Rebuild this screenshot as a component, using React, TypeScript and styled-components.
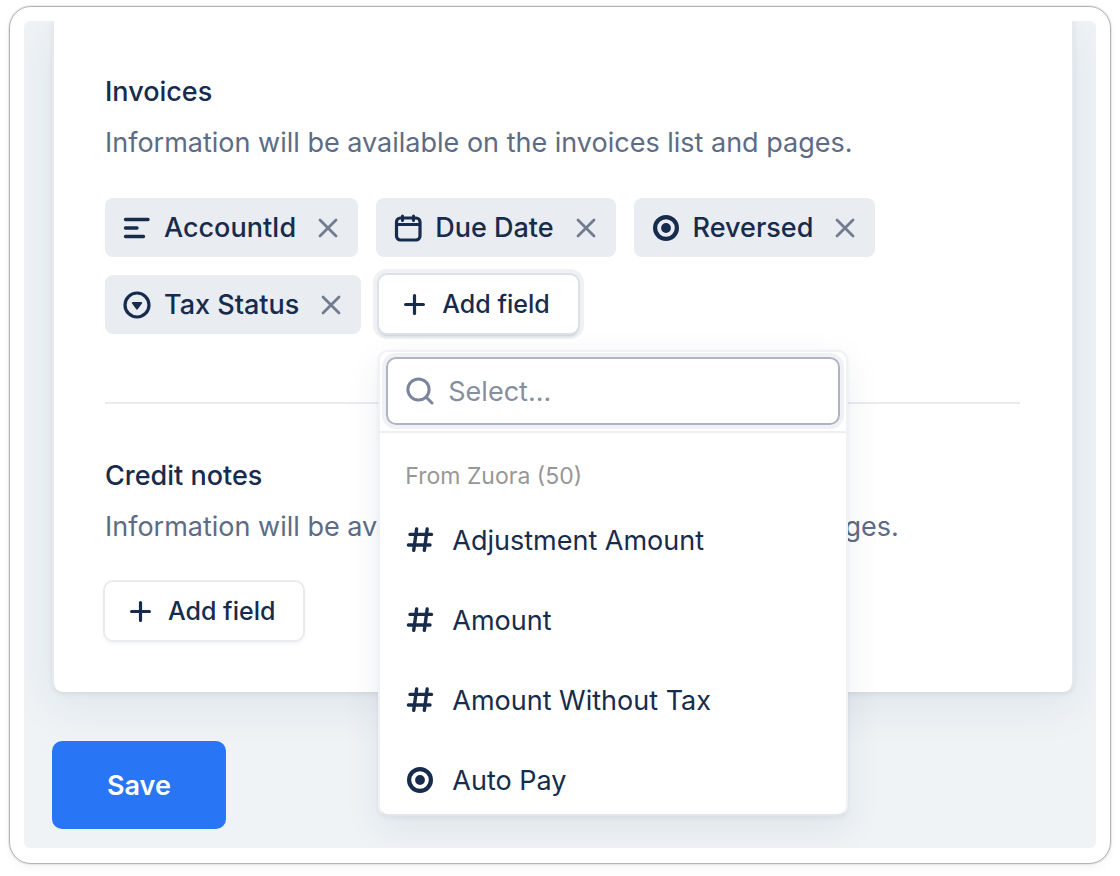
import React from "react";
import styled, { createGlobalStyle } from "styled-components";

const ink = "#172b4d";
const muted = "#5e6b84";

const GlobalStyle = createGlobalStyle`
  *, *::before, *::after { box-sizing: border-box; }
  body {
    margin: 0;
    background: #ffffff;
    color: ${ink};
    font-family: Inter, "Liberation Sans", sans-serif;
  }
  button, input { font: inherit; color: inherit; }
`;

const Page = styled.main`
  padding: 6px 9px 12px;
`;

const Frame = styled.div`
  padding: 14px 14px 15px;
  border: 1px solid #b4b4b4;
  border-radius: 22px;
  background: #ffffff;
  box-shadow: 0 0 1px 1px rgba(0, 0, 0, 0.08), 0 4px 8px rgba(0, 0, 0, 0.04);
`;

const Canvas = styled.div`
  padding: 0 22px 19px 28px;
  border-radius: 6px;
  overflow: hidden;
  background: #eff3f6;
`;

const Card = styled.form`
  padding: 53px 52px 52px 51px;
  border: 2px solid #e6e9ee;
  border-width: 0 2px;
  border-radius: 0 0 10px 10px;
  background: #ffffff;
  background-clip: padding-box;
  box-shadow: 0 2px 4px rgba(30, 50, 80, 0.08), 0 12px 48px rgba(30, 50, 80, 0.08);
`;

const Heading = styled.h2`
  margin: 0;
  font-size: 27px;
  line-height: 36px;
  font-weight: 500;
`;

const Description = styled.p`
  margin: 15px 0 37px;
  color: ${muted};
  font-size: 27px;
  line-height: 36px;
  white-space: nowrap;
`;

const Divider = styled.hr`
  height: 2px;
  margin: 68px 0 54px;
  border: 0;
  background: #e9ebee;
`;

const FieldList = styled.div`
  display: flex;
  flex-wrap: wrap;
  gap: 18px;
`;

const Chip = styled.span`
  display: inline-flex;
  align-items: center;
  height: 59px;
  padding: 0 20px 0 18px;
  border-radius: 8px;
  background: #e9ecf0;
  font-size: 27px;
  font-weight: 500;
`;

const ChipLabel = styled.span`
  margin: 0 22px 0 13px;
`;

const RemoveButton = styled.button`
  display: flex;
  padding: 0;
  border: 0;
  background: none;
  color: #717c8f;
`;

const AddButton = styled.button<{ $open?: boolean }>`
  display: inline-flex;
  align-items: center;
  gap: 17px;
  height: 58px;
  padding: 0 28px 0 25px;
  border: 0;
  border-radius: 8px;
  background: #ffffff;
  font-size: 25px;
  font-weight: 500;
  box-shadow: ${(p) =>
    p.$open
      ? "0 0 0 2px #dde0e6, 0 3px 3px 0 rgba(30, 50, 80, 0.2), 0 0 0 6px #eff1f4"
      : "0 0 0 2px #e9ebee, 0 3px 4px 1px rgba(30, 50, 80, 0.06)"};
`;

const MenuAnchor = styled.div`
  position: relative;
`;

const Menu = styled.div`
  position: absolute;
  z-index: 1;
  top: 75px;
  left: -1px;
  width: 470px;
  border: 2px solid #f0f1f4;
  border-bottom-color: #e2e5ea;
  border-radius: 10px;
  overflow: hidden;
  background: #ffffff;
  background-clip: padding-box;
  box-shadow: 0 2px 4px rgba(30, 50, 80, 0.06), 0 12px 36px rgba(30, 50, 80, 0.08);
`;

const SearchArea = styled.div`
  padding: 5px 6px 6px;
  border-bottom: 2px solid #eceef1;
`;

const SearchBox = styled.label`
  display: flex;
  align-items: center;
  gap: 14px;
  height: 68px;
  padding: 0 18px;
  border: 2px solid #afb4c3;
  border-radius: 10px;
  color: #7a859b;
  box-shadow: 0 0 0 4px #eff1f4;
`;

const SearchInput = styled.input`
  flex: 1;
  min-width: 0;
  padding: 0;
  border: 0;
  outline: 0;
  background: none;
  color: ${ink};
  font-size: 27px;

  &::placeholder { color: #858e9f; opacity: 1; }
`;

const Results = styled.div`
  max-height: 381px;
  overflow: hidden;
`;

const GroupLabel = styled.div`
  padding: 26px 25px 7px;
  color: #979797;
  font-size: 23px;
  line-height: 34px;
`;

const Options = styled.ul`
  margin: 0;
  padding: 0;
  list-style: none;
`;

const Option = styled.button`
  display: flex;
  align-items: center;
  gap: 18px;
  width: 100%;
  height: 80px;
  padding: 0 26px;
  border: 0;
  background: none;
  font-size: 27px;
  text-align: left;
`;

const SaveButton = styled.button`
  height: 88px;
  margin-top: 49px;
  padding: 0 55px;
  border: 0;
  border-radius: 10px;
  background: #2876f5;
  color: #ffffff;
  font-size: 27px;
  font-weight: 600;
`;

const Glyph = styled.svg`
  display: block;
  flex: none;
  fill: none;
  stroke: currentColor;
  stroke-width: 3;
  stroke-linecap: round;
  stroke-linejoin: round;
`;

type IconKind = "text" | "date" | "radio" | "select" | "number";

function FieldIcon({ kind }: { kind: IconKind }) {
  return (
    <Glyph width="28" height="28" viewBox="0 0 28 28" aria-hidden="true">
      {kind === "text" && <path d="M2.5 5.5H25M2.5 14H14M2.5 22.5H20.5" strokeWidth="3.4" />}
      {kind === "date" && (
        <>
          <rect x="2.5" y="4" width="23.5" height="22" rx="4" strokeWidth="3.2" />
          <path d="M3 10.5H25.5M8.5 2V6.5M19.5 2V6.5" />
        </>
      )}
      {kind === "radio" && (
        <>
          <circle cx="14" cy="14" r="10.9" strokeWidth="4.2" />
          <circle cx="14" cy="14" r="4.9" fill="currentColor" stroke="none" />
        </>
      )}
      {kind === "select" && (
        <>
          <circle cx="14" cy="14" r="12" strokeWidth="3.2" />
          <path d="M9.8 12H18.2L14 17.7Z" fill="currentColor" strokeWidth="1.8" />
        </>
      )}
      {kind === "number" && (
        <path
          d="M4 8.4H25.5M2.4 19H24M10.6 3L7.7 24.4M21.2 3L18.3 24.4"
          strokeWidth="3.4"
        />
      )}
    </Glyph>
  );
}

function CloseIcon() {
  return (
    <Glyph width="20" height="20" viewBox="0 0 20 20" aria-hidden="true">
      <path d="M2 2L18 18M18 2L2 18" strokeWidth="2.8" />
    </Glyph>
  );
}

function PlusIcon() {
  return (
    <Glyph width="21" height="21" viewBox="0 0 21 21" aria-hidden="true">
      <path d="M10.5 1.6V19.4M1.6 10.5H19.4" strokeWidth="3.2" />
    </Glyph>
  );
}

function SearchIcon() {
  return (
    <Glyph width="28" height="28" viewBox="0 0 28 28" aria-hidden="true">
      <circle cx="12.5" cy="12.5" r="10.6" />
      <path d="M20.5 20.5L26 26" />
    </Glyph>
  );
}

const fields: { label: string; kind: IconKind }[] = [
  { label: "AccountId", kind: "text" },
  { label: "Due Date", kind: "date" },
  { label: "Reversed", kind: "radio" },
  { label: "Tax Status", kind: "select" },
];

const options: { label: string; kind: IconKind }[] = [
  { label: "Adjustment Amount", kind: "number" },
  { label: "Amount", kind: "number" },
  { label: "Amount Without Tax", kind: "number" },
  { label: "Auto Pay", kind: "radio" },
];

export default function App() {
  return (
    <>
      <GlobalStyle />
      <Page>
        <Frame>
          <Canvas>
            <Card id="fields-form">
              <section>
                <Heading>Invoices</Heading>
                <Description>
                  Information will be available on the invoices list and pages.
                </Description>
                <FieldList>
                  {fields.map((f) => (
                    <Chip key={f.label}>
                      <FieldIcon kind={f.kind} />
                      <ChipLabel>{f.label}</ChipLabel>
                      <RemoveButton type="button" aria-label={`Remove ${f.label}`}>
                        <CloseIcon />
                      </RemoveButton>
                    </Chip>
                  ))}
                  <MenuAnchor>
                    <AddButton type="button" $open aria-expanded="true">
                      <PlusIcon />
                      Add field
                    </AddButton>
                    <Menu>
                      <SearchArea>
                        <SearchBox>
                          <SearchIcon />
                          <SearchInput
                            type="text"
                            placeholder="Select..."
                            aria-label="Search fields"
                          />
                        </SearchBox>
                      </SearchArea>
                      <Results>
                        <GroupLabel>From Zuora (50)</GroupLabel>
                        <Options>
                          {options.map((o) => (
                            <li key={o.label}>
                              <Option type="button">
                                <FieldIcon kind={o.kind} />
                                {o.label}
                              </Option>
                            </li>
                          ))}
                        </Options>
                      </Results>
                    </Menu>
                  </MenuAnchor>
                </FieldList>
              </section>
              <Divider />
              <section>
                <Heading>Credit notes</Heading>
                <Description>
                  Information will be available on the credit notes list and pages.
                </Description>
                <FieldList>
                  <AddButton type="button">
                    <PlusIcon />
                    Add field
                  </AddButton>
                </FieldList>
              </section>
            </Card>
            <SaveButton type="submit" form="fields-form">
              Save
            </SaveButton>
          </Canvas>
        </Frame>
      </Page>
    </>
  );
}
